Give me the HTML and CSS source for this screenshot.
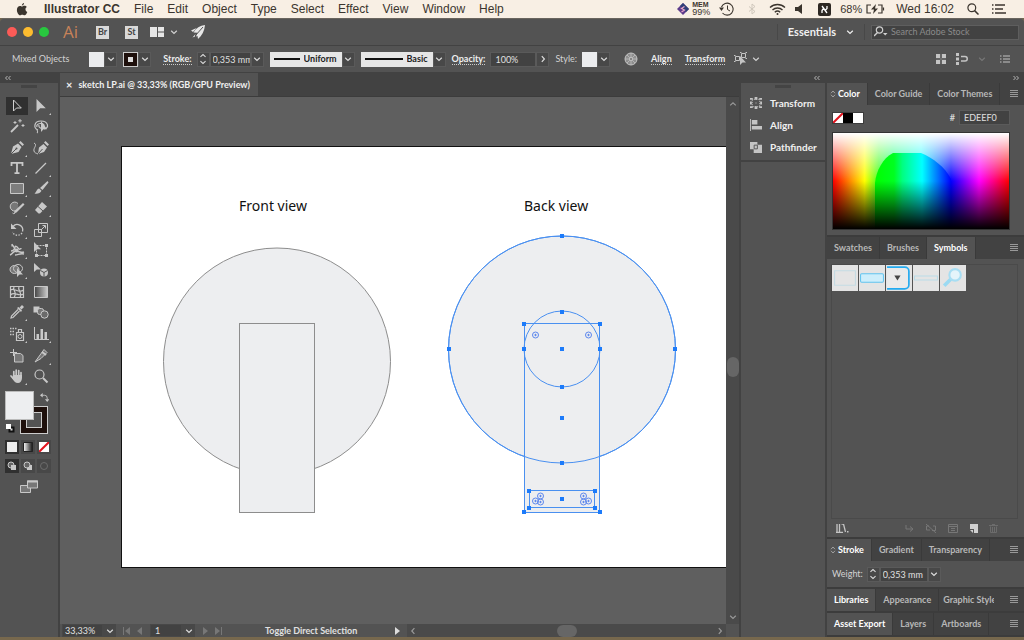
FILE: index.html
```html
<!DOCTYPE html>
<html lang="en">
<head>
    <meta charset="UTF-8">
    <meta name="viewport" content="width=device-width, initial-scale=1.0">
    <title>Illustrator CC</title>
    <link rel="stylesheet" href="styles.css">
</head>
<body>

    <!-- Shared icons -->
    <svg class="sprite" aria-hidden="true">
        <symbol id="chev" viewBox="0 0 8 8"><path d="M1.2 2.8 4 5.4 6.8 2.8" fill="none" stroke="currentColor" stroke-width="1.2"/></symbol>
        <symbol id="chev-up" viewBox="0 0 8 8"><path d="M1.2 5.4 4 2.8 6.8 5.4" fill="none" stroke="currentColor" stroke-width="1.2"/></symbol>
        <symbol id="chev-left" viewBox="0 0 8 8"><path d="M5.4 1.2 2.8 4 5.4 6.8" fill="none" stroke="currentColor" stroke-width="1.2"/></symbol>
        <symbol id="chev-right" viewBox="0 0 8 8"><path d="M2.8 1.2 5.4 4 2.8 6.8" fill="none" stroke="currentColor" stroke-width="1.2"/></symbol>
        <symbol id="spin" viewBox="0 0 8 14"><path d="M1 4.5 4 1.8 7 4.5M1 9.5 4 12.2 7 9.5" fill="none" stroke="currentColor" stroke-width="1.2"/></symbol>
        <symbol id="menu" viewBox="0 0 8 8"><path d="M0 .5h8M0 2.5h8M0 4.5h8M0 6.5h8" stroke="currentColor"/></symbol>
        <symbol id="none" viewBox="0 0 10 10"><path d="M0 0h10v10H0z" fill="#fff"/><path d="M0 10 10 0" stroke="#e3131d" stroke-width="2"/></symbol>
        <symbol id="collapse" viewBox="0 0 8 6"><path d="M3.5 1 1.5 3l2 2M6.5 1l-2 2 2 2" fill="none" stroke="currentColor"/></symbol>
        <symbol id="expand" viewBox="0 0 8 6"><path d="M1.5 1l2 2-2 2M4.5 1l2 2-2 2" fill="none" stroke="currentColor"/></symbol>
        <symbol id="updown" viewBox="0 0 6 8"><path d="M1 3.2 3 1l2 2.2M1 4.8 3 7l2-2.2" fill="none" stroke="currentColor" stroke-width=".8"/></symbol>
    </svg>

    <!-- System menu bar -->
    <header class="menubar">
        <svg class="apple" viewBox="0 0 12 14"><path d="M8.2 0c.1 1.400-1.100 2.800-2.400 2.800C5.700 1.500 6.900.1 8.200 0zM6 3.800c.6 0 1.400-.8 2.700-.8.9 0 1.900.5 2.500 1.400-2.200 1.200-1.800 4.400.5 5.200-.5 1.400-1.700 3.700-3 3.700-.9 0-1.300-.6-2.400-.6s-1.500.6-2.300.6C2.500 13.300.5 10.300.5 7.500.5 4.700 2.200 3.100 3.900 3.100c1 0 1.700.7 2.100.7z" fill="#3b352e"/></svg>
        <nav class="menus">
            <button class="menu app-name">Illustrator CC</button>
            <button class="menu">File</button>
            <button class="menu">Edit</button>
            <button class="menu">Object</button>
            <button class="menu">Type</button>
            <button class="menu">Select</button>
            <button class="menu">Effect</button>
            <button class="menu">View</button>
            <button class="menu">Window</button>
            <button class="menu">Help</button>
        </nav>
        <div class="sys">
            <svg width="12" height="12" viewBox="0 0 12 12"><path d="M6 0l6 6-6 6-6-6z" fill="#5d3c8c"/><path d="M6 0l6 6-3 3-6-6z" fill="#2e3f77"/><path d="M7.5 3.5 4.5 5.5l3 1.5-3 2" fill="none" stroke="#e8a6c8" stroke-width="1.2"/></svg>
            <div class="mem"><b>MEM</b><span>99%</span></div>
            <svg width="16" height="14" viewBox="0 0 16 14"><path d="M2.500 5A6 6 0 1 1 3.500 11" fill="none" stroke="#3b352e" stroke-width="1.1"/><path d="M0 5.500h5L2.500 9z" fill="#3b352e"/><path d="M8.500 3.500V7.500l2.500 1.500" fill="none" stroke="#3b352e"/></svg>
            <svg width="8" height="12" viewBox="0 0 8 12"><path d="M1 3.500 7 8.500 4 11V1l3 2.500-6 5" fill="none" stroke="#cfc7bc"/></svg>
            <svg width="17" height="12" viewBox="0 0 17 12"><path d="M1 4.500a11 11 0 0 1 15 0M3.500 7a7.200 7.200 0 0 1 10 0M5.800 9.300a4 4 0 0 1 5.400 0" fill="none" stroke="#3b352e" stroke-width="1.4"/><circle cx="8.5" cy="11" r="1" fill="#3b352e"/></svg>
            <svg class="sys-vol" width="8" height="10" viewBox="0 0 8 10"><path d="M0 3h3l4-3v10L3 7H0z" fill="#3b352e"/></svg>
            <svg width="13" height="13" viewBox="0 0 13 13"><rect width="13" height="13" rx="2" fill="#2d2823"/><path d="M4 3l5 7M9 3v2.500L7.500 7M4 10V7.500L5.500 5.500" stroke="#fff" stroke-width="1.3" fill="none"/></svg>
            <span class="battery">68%
                <svg width="19" height="10" viewBox="0 0 19 10"><path d="M5 1H1v8h4M12 1h4v8h-4M17.500 3.500v3" fill="none" stroke="#3b352e" stroke-width="1.2"/><path d="M10 0 5 5.500h3L7 10l5-5.500H9z" fill="#3b352e"/></svg>
            </span>
            <span class="clock">Wed 16:02</span>
            <svg width="12" height="12" viewBox="0 0 12 12"><circle cx="4.8" cy="4.8" r="3.9" fill="none" stroke="#3b352e" stroke-width="1.2"/><path d="M7.600 7.600 11.500 11.500" stroke="#3b352e" stroke-width="1.5"/></svg>
            <svg width="14" height="10" viewBox="0 0 14 10"><path d="M3 1h10M3 5h8M3 9h11M0 1h1.500M0 5h1.500M0 9h1.500" stroke="#3b352e" stroke-width="1.5"/></svg>
        </div>
    </header>

    <div class="window">
        <!-- Title bar -->
        <div class="titlebar">
            <div class="lights">
                <button class="light red" aria-label="Close"></button>
                <button class="light yellow" aria-label="Minimize"></button>
                <button class="light green" aria-label="Zoom"></button>
            </div>
            <span class="logo">Ai</span>
            <button class="square">Br</button>
            <button class="square">St</button>
            <button class="plain layout-btn" aria-label="Arrange documents">
                <svg width="14" height="10" viewBox="0 0 14 10"><path d="M0 0h7v10H0zM8 0h6v4.500H8zM8 5.500h6V10H8z" fill="#e6e6e6"/></svg>
                <svg class="i8"><use href="#chev"/></svg>
            </button>
            <button class="plain" aria-label="GPU performance">
                <svg width="14" height="14" viewBox="0 0 14 14"><path d="M14 0C9 .5 5 3 2.500 7.500l4 .2L5 11.500l1.500-.5L7 14C11 10.500 13.500 6 14 0zM0 5.500 5.500 3 2 7zM4.500 9 1.500 12.500 4 11.500z" fill="#e6e6e6"/><path d="M12 2 4 11" stroke="#535353"/></svg>
            </button>
            <div class="title-right">
                <button class="workspace-switch">Essentials <svg class="i8"><use href="#chev"/></svg></button>
                <label class="search">
                    <svg width="14" height="12" viewBox="0 0 14 12"><circle cx="5.5" cy="4" r="3.2" fill="none" stroke="#d0d0d0" stroke-width="1.2"/><path d="M3.500 6.500 0 10" stroke="#d0d0d0" stroke-width="1.4"/><path d="M9 7h4.500L11.200 9.500z" fill="#d0d0d0"/></svg>
                    <input type="text" placeholder="Search Adobe Stock" aria-label="Search Adobe Stock">
                </label>
            </div>
        </div>

        <!-- Control bar -->
        <div class="controlbar">
            <span class="selection-name">Mixed Objects</span>
            <div class="combo">
                <button class="swatch" aria-label="Fill"></button>
                <button class="arrow" aria-label="Fill options"><svg class="i8"><use href="#chev"/></svg></button>
            </div>
            <div class="combo">
                <button class="swatch stroke-swatch" aria-label="Stroke colour"></button>
                <button class="arrow" aria-label="Stroke options"><svg class="i8"><use href="#chev"/></svg></button>
            </div>
            <div class="field first">
                <label class="link" for="stroke-width">Stroke:</label>
                <div class="combo">
                    <button class="arrow" aria-label="Step"><svg class="spin"><use href="#spin"/></svg></button>
                    <input class="box stroke-box" id="stroke-width" type="text" value="0,353 mm">
                    <button class="arrow" aria-label="Stroke presets"><svg class="i8"><use href="#chev"/></svg></button>
                </div>
            </div>
            <div class="combo">
                <div class="line-pick">
                    <span class="line"></span>
                    <select aria-label="Width profile"><option>Uniform</option></select>
                </div>
                <span class="arrow"><svg class="i8"><use href="#chev"/></svg></span>
            </div>
            <div class="combo">
                <div class="line-pick">
                    <span class="line"></span>
                    <select aria-label="Brush"><option>Basic</option></select>
                </div>
                <span class="arrow"><svg class="i8"><use href="#chev"/></svg></span>
            </div>
            <div class="field">
                <label class="link" for="opacity">Opacity:</label>
                <div class="combo">
                    <input class="box opacity-box" id="opacity" type="text" value="100%">
                    <button class="arrow" aria-label="Opacity slider"><svg class="i8"><use href="#chev-right"/></svg></button>
                </div>
            </div>
            <div class="field">
                <span>Style:</span>
                <div class="combo">
                    <button class="swatch" aria-label="Graphic style"></button>
                    <button class="arrow" aria-label="Style options"><svg class="i8"><use href="#chev"/></svg></button>
                </div>
            </div>
            <div class="actions">
                <button class="plain" aria-label="Recolor artwork">
                    <svg width="14" height="14" viewBox="0 0 14 14"><circle cx="7" cy="7" r="6" fill="#8e8e8e" stroke="#c4c4c4"/><path d="M7 1v12M1 7h12M3 3l8 8M11 3l-8 8" stroke="#c4c4c4" stroke-width=".7"/><circle cx="7" cy="7" r="1.5" fill="#6a6a6a" stroke="#c4c4c4"/></svg>
                </button>
                <button class="plain link">Align</button>
                <button class="plain link">Transform</button>
                <button class="plain isolate" aria-label="Select similar">
                    <svg width="14" height="14" viewBox="0 0 14 14"><path d="M7.500 1.500h4v4h-4zM1.500 4.500h4v4h-4zM6 .5h1.500M11.500 .5H13M0 3.500h1.500M0 9.500h1.500M13 6.500h-1.500" fill="none" stroke="#c4c4c4"/><path d="M6 4v9l2.500-2.500H12z" fill="#c4c4c4"/></svg>
                    <svg class="i8"><use href="#chev"/></svg>
                </button>
            </div>
            <div class="bar-right">
                <svg width="10" height="10" viewBox="0 0 10 10"><path d="M0 0h4v4H0zM6 0h4v4H6zM0 6h4v4H0zM6 6h4v4H6z" fill="#c4c4c4"/><path d="M5 0v10M0 5h10" stroke="#777"/></svg>
                <svg width="12" height="12" viewBox="0 0 12 12"><path d="M0 0h3v3H0zM0 4.500h3v3H0zM0 9h3v3H0z" fill="#c4c4c4"/><path d="M5 3.500h4a2 2 0 0 1 0 4.500H5" fill="none" stroke="#c4c4c4" stroke-width="1.5"/></svg>
                <svg class="i8 dim"><use href="#chev"/></svg>
                <svg class="list-icon" width="10" height="8" viewBox="0 0 10 8"><path d="M3 1h7M3 4h7M3 7h7M0 1h1.500M0 4h1.500M0 7h1.500" stroke="#c4c4c4"/></svg>
            </div>
        </div>

        <div class="workspace">
            <!-- Tools panel -->
            <aside class="tools">
                <div class="strip left"><svg class="fold"><use href="#collapse"/></svg></div>
                <div class="grip"></div>
                <div class="tool-groups">
                    <div class="tool-group">
                        <button class="tool active" aria-label="Selection"><svg viewBox="0 0 16 16"><path d="M4.500 2v11l3-3h4.800z" fill="none" stroke="#d0d0d0"/></svg></button>
                        <button class="tool more" aria-label="Direct Selection"><svg viewBox="0 0 16 16"><path d="M3.500 1v13l3.700-3.700h5.600z" fill="#c8c8c8"/></svg></button>
                        <button class="tool" aria-label="Magic Wand"><svg viewBox="0 0 16 16"><path d="M2 14 9 7" stroke="#c8c8c8" stroke-width="1.8"/><path d="M11 1v3.500M9.300 2.800h3.500M14 6v3M12.500 7.500h3M6 3v3M4.500 4.500h3" stroke="#c8c8c8"/></svg></button>
                        <button class="tool" aria-label="Lasso"><svg viewBox="0 0 16 16"><path d="M5 12c-5-2-4-9 3-9s9 7 3 8M4 9c-2-4 8-5 7-1S5 10 6 7M4 12c1 2 1 2 0 3" fill="none" stroke="#c8c8c8" stroke-width="1.2"/><path d="M8 3v11l2.500-2.800h3.500z" fill="#c8c8c8"/></svg></button>
                    </div>
                    <div class="tool-group">
                        <button class="tool more" aria-label="Pen"><svg viewBox="0 0 16 16"><path d="M2 14 4 6.500 9 3.500 12.500 7 9.500 12z" fill="#c8c8c8"/><path d="M10 2.500 11.500 1 15 4.500 13.500 6z" fill="#c8c8c8"/><path d="M2 14l5-5" stroke="#535353"/><circle cx="7.5" cy="8.5" r="1" fill="#535353"/></svg></button>
                        <button class="tool" aria-label="Curvature"><svg viewBox="0 0 16 16"><path d="M5 14 6 7.500 10.500 4 14 7.500 11 12z" fill="#c8c8c8"/><path d="M11 2.500 12.500 1 16 4.500 14.500 6z" fill="#c8c8c8"/><path d="M5 14l4.500-5" stroke="#535353"/><path d="M1 3c4 2-1 5 0 8 .5 2 2 2 4 3" fill="none" stroke="#c8c8c8"/></svg></button>
                        <button class="tool more" aria-label="Type"><svg viewBox="0 0 16 16"><path d="M2.500 6V2.800h11V6M8 2.500v11M5.500 13.200h5" fill="none" stroke="#c8c8c8" stroke-width="1.800"/></svg></button>
                        <button class="tool more" aria-label="Line Segment"><svg viewBox="0 0 16 16"><path d="M2.500 13.500 13 3" stroke="#c8c8c8" stroke-width="1.2"/></svg></button>
                        <button class="tool more" aria-label="Rectangle"><svg viewBox="0 0 16 16"><path d="M1.500 3.500h13v10h-13z" fill="#7d7d7d" stroke="#c8c8c8"/></svg></button>
                        <button class="tool more" aria-label="Paintbrush"><svg viewBox="0 0 16 16"><path d="M14.500 1 15.500 2.500 9.500 10 7 8z" fill="#c8c8c8"/><path d="M6.200 8.500 8.500 10.800C7.500 13.500 4 14 1.500 13.500 3.500 12.500 3.500 9 6.200 8.500z" fill="#c8c8c8"/></svg></button>
                        <button class="tool more" aria-label="Shaper"><svg viewBox="0 0 16 16"><path d="M9.500 9A4.500 4.500 0 1 1 9 3.500" fill="#777" stroke="#c8c8c8"/><path d="M3.500 13c1 1 2 1 3-.5" fill="none" stroke="#c8c8c8"/><path d="M14 3l1.500 1.500-8 8-2.500.5.500-2z" fill="#c8c8c8"/></svg></button>
                        <button class="tool more" aria-label="Eraser"><svg viewBox="0 0 16 16"><path d="M9 2 14 6.500 7 13.500H5.500L2 10z" fill="#c8c8c8"/><path d="M5 6.500 10 11" stroke="#535353"/></svg></button>
                    </div>
                    <div class="tool-group">
                        <button class="tool more" aria-label="Rotate"><svg viewBox="0 0 16 16"><path d="M4 4.500a5.500 5.500 0 0 1 9.500 5" fill="none" stroke="#c8c8c8" stroke-width="1.3"/><path d="M13 11a5.500 5.500 0 0 1-9.500-1" fill="none" stroke="#c8c8c8" stroke-width="1.3" stroke-dasharray="1.5 1.3"/><path d="M2 1.500V7h5.500z" fill="#c8c8c8"/></svg></button>
                        <button class="tool more" aria-label="Scale"><svg viewBox="0 0 16 16"><path d="M5.500 1.500h9v9h-9zM1.500 7.500h7v7h-7z" fill="none" stroke="#c8c8c8"/><path d="M8 8l4-4M9.500 3.500h3v3" fill="none" stroke="#c8c8c8"/></svg></button>
                        <button class="tool more" aria-label="Width"><svg viewBox="0 0 16 16"><path d="M1 13c3-1 3-4 6-4s5 2 8 1M2 9c3 0 4-3 4-4s2-1 3 1 3 1 3 0M6 13c3 0 5-2 9-1" fill="none" stroke="#c8c8c8" stroke-width="1.5"/><path d="M3 2l4 7M3 2v2h2" stroke="#c8c8c8" stroke-width="1.2" fill="none"/><circle cx="7.500" cy="8.500" r="2" fill="#c8c8c8"/></svg></button>
                        <button class="tool" aria-label="Free Transform"><svg viewBox="0 0 16 16"><path d="M3.500 3.500h10v10h-10z" fill="none" stroke="#c8c8c8" stroke-dasharray="2 1"/><path d="M2 12h3v3H2zM12 12h3v3h-3zM12 2h3v3h-3z" fill="#c8c8c8"/><path d="M1 0v10l3-2.800h4z" fill="#c8c8c8"/></svg></button>
                        <button class="tool more" aria-label="Shape Builder"><svg viewBox="0 0 16 16"><ellipse cx="5.500" cy="7.500" rx="4.500" ry="4" fill="#777" stroke="#c8c8c8"/><ellipse cx="9" cy="6.500" rx="4.500" ry="4" fill="none" stroke="#c8c8c8"/><path d="M8 6v9l2.500-2.500H14z" fill="#c8c8c8"/></svg></button>
                        <button class="tool more" aria-label="Live Paint"><svg viewBox="0 0 16 16"><path d="M1 1v9l2.800-2.600H8z" fill="#c8c8c8"/><circle cx="11" cy="10.500" r="4" fill="#c8c8c8"/><path d="M11 10.500v4M11 10.500 7.500 8.500M11 10.500l3.500-2" stroke="#535353"/></svg></button>
                    </div>
                    <div class="tool-group">
                        <button class="tool" aria-label="Mesh"><svg viewBox="0 0 16 16"><path d="M1.500 2.500h13v11h-13zM1.500 6c4-3 8 4 13 0M1.500 11c4-4 8 2 13-1M5 2.500c-2 4 4 6 0 11M10 2.500c-2 4 4 6 1 11" fill="none" stroke="#c8c8c8" stroke-width="1.2"/></svg></button>
                        <button class="tool" aria-label="Gradient"><svg viewBox="0 0 16 16"><defs><linearGradient id="toolgrad"><stop offset="0" stop-color="#444"/><stop offset="1" stop-color="#ccc"/></linearGradient></defs><path d="M1.500 2.500h13v11h-13z" fill="url(#toolgrad)" stroke="#c8c8c8"/></svg></button>
                        <button class="tool more" aria-label="Eyedropper"><svg viewBox="0 0 16 16"><path d="M9 5.500 2.500 12 2 14l2-.5L10.500 7" fill="none" stroke="#c8c8c8" stroke-width="1.2"/><path d="M8 4l1.500-1L13 6.500 12 8zM10.500 3.500 13 1l2 2-2.500 2.500z" fill="#c8c8c8"/></svg></button>
                        <button class="tool" aria-label="Blend"><svg viewBox="0 0 16 16"><path d="M.5 2.500h6v6h-6z" fill="#c8c8c8"/><rect x="4.500" y="4.500" width="6" height="6" rx="2" fill="#777" stroke="#c8c8c8"/><circle cx="11.500" cy="10.500" r="3.700" fill="#6a6a6a" stroke="#c8c8c8"/></svg></button>
                    </div>
                    <div class="tool-group">
                        <button class="tool more" aria-label="Symbol Sprayer"><svg viewBox="0 0 16 16"><path d="M7.500 6.500h7v8h-7zM9.500 3.500h3v3h-3z" fill="none" stroke="#c8c8c8" stroke-width="1.2"/><circle cx="11" cy="10.500" r="2" fill="none" stroke="#c8c8c8"/><path d="M1 2.500h7M1 5.500h5M1 8.500h4" stroke="#c8c8c8" stroke-width="1.5" stroke-dasharray="1.5 1"/></svg></button>
                        <button class="tool more" aria-label="Column Graph"><svg viewBox="0 0 16 16"><path d="M1.500 1v12.500H16" fill="none" stroke="#c8c8c8"/><path d="M3.500 8H6v5H3.500zM7.500 3H10v10H7.500zM11.500 6H14v7h-2.500z" fill="#c8c8c8"/></svg></button>
                    </div>
                    <div class="tool-group">
                        <button class="tool" aria-label="Artboard"><svg viewBox="0 0 16 16"><path d="M1 4.500h7M4.500 1v7" stroke="#c8c8c8"/><path d="M5.500 5.500h6l2.500 2v6.500H5.500z" fill="#777" stroke="#c8c8c8"/></svg></button>
                        <button class="tool more" aria-label="Slice"><svg viewBox="0 0 16 16"><path d="M2 14 11 1.500 14 4.500 8 10.500z" fill="#777" stroke="#c8c8c8"/><path d="M9 4l4 3" stroke="#c8c8c8" stroke-width="2"/></svg></button>
                        <button class="tool more" aria-label="Hand"><svg viewBox="0 0 16 16"><path d="M4.800 8V3.500M7.200 7V2M9.700 7V2.500M12 8V4.500M2 8l3 3.500" stroke="#c8c8c8" stroke-width="1.7" stroke-linecap="round"/><path d="M4 7h9v3c0 3-2 5-4 5-3 0-4-2-6-5z" fill="#c8c8c8"/></svg></button>
                        <button class="tool" aria-label="Zoom"><svg viewBox="0 0 16 16"><circle cx="6.5" cy="6.5" r="4.5" fill="none" stroke="#c8c8c8" stroke-width="1.2"/><path d="M10 10l4.500 4.500" stroke="#c8c8c8" stroke-width="2"/></svg></button>
                    </div>
                </div>
                <div class="fill-stroke">
                    <button class="fs-stroke" aria-label="Stroke"></button>
                    <button class="fs-fill" aria-label="Fill"></button>
                    <button class="fs-swap" aria-label="Swap fill and stroke"><svg viewBox="0 0 10 10"><path d="M2.500 2.500H5a3 3 0 0 1 3 3V7" fill="none" stroke="#c8c8c8"/><path d="M0 2.500 3 0v5zM8 10 5.500 7h5z" fill="#c8c8c8"/></svg></button>
                    <button class="fs-default" aria-label="Default fill and stroke"><svg viewBox="0 0 9 9"><path d="M3.500 3.500h4v4h-4z" fill="#ddd" stroke="#111" stroke-width="2"/><path d="M0 0h5v5H0z" fill="#fff"/></svg></button>
                </div>
                <div class="modes">
                    <button class="mode on" aria-label="Color"><svg viewBox="0 0 10 10"><path d="M0 0h10v10H0z" fill="#eee"/></svg></button>
                    <button class="mode" aria-label="Gradient"><svg viewBox="0 0 10 10"><defs><linearGradient id="modegrad"><stop offset="0" stop-color="#fff"/><stop offset="1" stop-color="#111"/></linearGradient></defs><path d="M.5.5h9v9h-9z" fill="url(#modegrad)" stroke="#222"/></svg></button>
                    <button class="mode" aria-label="None"><svg viewBox="0 0 10 10"><use href="#none"/></svg></button>
                </div>
                <div class="modes">
                    <button class="mode on" aria-label="Draw Normal"><svg viewBox="0 0 10 10"><circle cx="4" cy="4" r="3" fill="#666" stroke="#c8c8c8"/><path d="M4 4h5v5H4z" fill="#c8c8c8"/></svg></button>
                    <button class="mode" aria-label="Draw Behind"><svg viewBox="0 0 10 10"><path d="M4 4h5v5H4z" fill="#c8c8c8"/><circle cx="4" cy="4" r="3" fill="#666" stroke="#c8c8c8"/></svg></button>
                    <button class="mode" aria-label="Draw Inside"><svg viewBox="0 0 10 10"><circle cx="5" cy="5" r="3.5" fill="#484848" stroke="#6c6c6c"/></svg></button>
                </div>
                <button class="plain screen-mode" aria-label="Change screen mode"><svg width="18" height="13" viewBox="0 0 18 13"><path d="M.5 5.500h10v7H.5z" fill="#777" stroke="#c8c8c8"/><path d="M7.500 1h10v7h-10z" fill="#777" stroke="#c8c8c8"/><path d="M7 1.500h11" stroke="#c8c8c8" stroke-width="2"/></svg></button>
            </aside>

            <!-- Document -->
            <main class="document">
                <div class="doc-tabs">
                    <div class="doc-tab"><button class="plain close" aria-label="Close tab">×</button>sketch LP.ai @ 33,33% (RGB/GPU Preview)</div>
                </div>
                <div class="doc-view">
                    <div class="canvas">
                        <div class="artboard">
                            <svg class="artwork" width="640" height="420" viewBox="0 0 640 420">
                                <text class="caption" x="117" y="64">Front view</text>
                                <text class="caption" x="402" y="64">Back view</text>
                                <g fill="#edeef0" stroke="#8d8d8d">
                                    <circle cx="155" cy="214.5" r="113.5"/>
                                    <rect x="117.5" y="176.5" width="75" height="189"/>
                                </g>
                                <g fill="#edeef0" stroke="#4a90f0">
                                    <circle cx="440" cy="202.5" r="113.5"/>
                                    <rect x="402.5" y="176.5" width="75" height="189"/>
                                    <circle cx="440" cy="202.5" r="113.5" fill="none"/>
                                    <circle cx="440" cy="202" r="38" fill="none"/>
                                    <rect x="407.5" y="343.5" width="65" height="17"/>
                                </g>
                                <!-- screws -->
                                <g fill="none" stroke="#5b86ee">
                                    <g id="screw"><circle cx="413.5" cy="188" r="3"/><circle cx="413.5" cy="188" r=".7" fill="#2a62e0"/></g>
                                    <use href="#screw" x="53"/>
                                    <use href="#screw" x="5" y="161"/>
                                    <use href="#screw" x="0" y="166"/>
                                    <use href="#screw" x="5" y="167"/>
                                    <use href="#screw" x="48" y="161"/>
                                    <use href="#screw" x="48" y="167"/>
                                    <use href="#screw" x="53" y="166"/>
                                </g>
                                <!-- anchors and centre points -->
                                <path fill="#1d7bfa" d="M438 87h4v4h-4zM438 314h4v4h-4zM325 200h4v4h-4zM551 200h4v4h-4zM438 163h4v4h-4zM438 238h4v4h-4zM400 200h4v4h-4zM476 200h4v4h-4zM438 200h4v4h-4zM400 175h4v4h-4zM476 175h4v4h-4zM400 363h4v4h-4zM476 363h4v4h-4zM438 269h4v4h-4zM405 342h4v4h-4zM471 342h4v4h-4zM405 359h4v4h-4zM471 359h4v4h-4zM438 350h4v4h-4z"/>
                            </svg>
                        </div>
                    </div>
                    <div class="vscroll">
                        <svg class="i8"><use href="#chev-up"/></svg>
                        <div class="thumb"></div>
                        <svg class="i8"><use href="#chev"/></svg>
                    </div>
                </div>
                <div class="statusbar">
                    <div class="combo">
                        <input class="box zoom-box" type="text" value="33,33%" aria-label="Zoom">
                        <button class="arrow" aria-label="Zoom presets"><svg class="i8"><use href="#chev"/></svg></button>
                    </div>
                    <div class="page-nav">
                        <svg class="i8" viewBox="0 0 8 8"><path d="M1 0h1v8H1zM8 0v8L3 4z" fill="#777"/></svg>
                        <svg class="i8" viewBox="0 0 8 8"><path d="M6 0v8L1 4z" fill="#777"/></svg>
                    </div>
                    <div class="combo">
                        <input class="box page-box" type="text" value="1" aria-label="Artboard number">
                        <button class="arrow" aria-label="Artboards"><svg class="i8"><use href="#chev"/></svg></button>
                    </div>
                    <div class="page-nav">
                        <svg class="i8" viewBox="0 0 8 8"><path d="M2 0v8l5-4z" fill="#777"/></svg>
                        <svg class="i8" viewBox="0 0 8 8"><path d="M6 0h1v8H6zM0 0v8l5-4z" fill="#777"/></svg>
                    </div>
                    <span class="status-text">Toggle Direct Selection</span>
                    <svg class="i8" viewBox="0 0 8 8"><path d="M2 0v8l5-4z" fill="#ddd"/></svg>
                    <div class="hscroll">
                        <svg class="i8"><use href="#chev-left"/></svg>
                        <div class="thumb"></div>
                        <svg class="i8"><use href="#chev-right"/></svg>
                    </div>
                </div>
            </main>

            <!-- Collapsed dock -->
            <aside class="dock">
                <div class="strip right"><svg class="fold"><use href="#collapse"/></svg></div>
                <div class="dock-items">
                    <div class="grip"></div>
                    <button class="dock-item"><svg viewBox="0 0 13 13"><path d="M2.500 2.500h8v8h-8z" fill="none" stroke="#c4c4c4" stroke-dasharray="1 1"/><path d="M0 1h3v2H0zM5 0h3v3H5zM10 1h3v2h-3zM0 10h3v2H0zM5 10h3v3H5zM10 10h3v2h-3zM0 5h2v3H0zM11 5h2v3h-2zM6 6h1v1H6z" fill="#c4c4c4"/></svg>Transform</button>
                    <button class="dock-item"><svg viewBox="0 0 13 13"><path d="M.5 0v13" stroke="#c4c4c4"/><path d="M2 1h6v5H2zM2 7.500h11v4H2z" fill="#c4c4c4"/></svg>Align</button>
                    <button class="dock-item"><svg viewBox="0 0 13 13"><path d="M0 1h8v3h5v9H4V9H0z" fill="#c4c4c4"/><path d="M4.500 4.500h3.500v4H4.500z" fill="none" stroke="#535353"/></svg>Pathfinder</button>
                </div>
            </aside>

            <!-- Panels -->
            <aside class="panels">
                <div class="strip right"><svg class="fold"><use href="#expand"/></svg></div>
                <section class="panel">
                    <div class="tabs" role="tablist">
                        <button class="tab active" role="tab"><svg class="updown"><use href="#updown"/></svg>Color</button>
                        <button class="tab" role="tab">Color Guide</button>
                        <button class="tab" role="tab">Color Themes</button>
                        <button class="panel-menu" aria-label="Panel menu"><svg class="i8"><use href="#menu"/></svg></button>
                    </div>
                    <div class="color-body">
                        <div class="color-row">
                            <div class="mini-swatches">
                                <svg viewBox="0 0 10 10"><use href="#none"/></svg>
                                <span class="black"></span>
                                <span class="white"></span>
                            </div>
                            <label class="hex">#<input class="box hex-box" type="text" value="EDEEF0"></label>
                        </div>
                        <svg class="spectrum" viewBox="0 0 176 96" preserveAspectRatio="none">
                            <defs>
                                <linearGradient id="hue">
                                    <stop offset="0" stop-color="#f00"/>
                                    <stop offset=".18" stop-color="#ff0"/>
                                    <stop offset=".26" stop-color="#4f2"/>
                                    <stop offset=".34" stop-color="#0f6"/>
                                    <stop offset=".5" stop-color="#0ff"/>
                                    <stop offset=".58" stop-color="#08f"/>
                                    <stop offset=".67" stop-color="#00f"/>
                                    <stop offset=".83" stop-color="#f0f"/>
                                    <stop offset="1" stop-color="#f00"/>
                                </linearGradient>
                                <linearGradient id="gamut" gradientUnits="userSpaceOnUse" x1="42" y1="0" x2="118" y2="0">
                                    <stop offset="0" stop-color="#0f0"/>
                                    <stop offset=".25" stop-color="#00ff20"/>
                                    <stop offset=".36" stop-color="#00ff80"/>
                                    <stop offset=".62" stop-color="#0ff"/>
                                    <stop offset="1" stop-color="#00f"/>
                                </linearGradient>
                                <linearGradient id="tint" x2="0" y2="1">
                                    <stop offset="0" stop-color="#fff"/>
                                    <stop offset=".5" stop-color="#fff" stop-opacity="0"/>
                                </linearGradient>
                                <linearGradient id="shade" x2="0" y2="1">
                                    <stop offset=".5" stop-opacity="0"/>
                                    <stop offset="1"/>
                                </linearGradient>
                            </defs>
                            <rect width="176" height="96" fill="url(#hue)"/>
                            <rect width="176" height="96" fill="url(#tint)"/>
                            <path d="M42 96V50C43 38 50 25 60 20H88C100 25 112 34 118 46V96z" fill="url(#gamut)"/>
                            <rect width="176" height="96" fill="url(#shade)"/>
                        </svg>
                    </div>
                </section>
                <section class="panel grow">
                    <div class="tabs" role="tablist">
                        <button class="tab" role="tab">Swatches</button>
                        <button class="tab" role="tab">Brushes</button>
                        <button class="tab active" role="tab">Symbols</button>
                        <button class="panel-menu" aria-label="Panel menu"><svg class="i8"><use href="#menu"/></svg></button>
                    </div>
                    <div class="symbol-list">
                        <button class="symbol" aria-label="Panel frame"><svg viewBox="0 0 25 25"><path d="M2.500 5.500h20v14h-20z" fill="none" stroke="#c3dbe3"/></svg></button>
                        <button class="symbol" aria-label="Button"><svg viewBox="0 0 25 25"><rect x="1.5" y="8.5" width="22" height="8" rx="1" fill="#cdeefb" stroke="#62c3ee"/></svg></button>
                        <button class="symbol" aria-label="Drop-down"><svg viewBox="0 0 25 25"><path d="M1 2h17a4 4 0 0 1 4 4v13a4 4 0 0 1-4 4H1" fill="#eaeaea" stroke="#22aaf0" stroke-width="1.6"/><path d="M8 10h6l-3 5z" fill="#444"/></svg></button>
                        <button class="symbol" aria-label="Field"><svg viewBox="0 0 25 25"><path d="M1.500 10.500h22v4h-22z" fill="none" stroke="#b9dce8"/></svg></button>
                        <button class="symbol" aria-label="Magnifier"><svg viewBox="0 0 25 25"><path d="M11 13 4 20" stroke="#9bdaf2" stroke-width="3.5"/><circle cx="14.5" cy="9.5" r="5.5" fill="#e4f4fa" stroke="#a8def3" stroke-width="2"/></svg></button>
                    </div>
                    <div class="panel-footer">
                        <svg width="13" height="9" viewBox="0 0 13 9"><path d="M1 0v8M3.500 0v8M5.500 0h2l2 8M0 8.500h7" stroke="#c4c4c4" fill="none" stroke-width="1.3"/><path d="M11 7h1.500v1.500H11z" fill="#c4c4c4"/></svg>
                        <svg class="foot-place" width="9" height="9" viewBox="0 0 9 9"><path d="M1 1v4h6M5 2.500 8 5 5 7.500" fill="none" stroke="#777"/></svg>
                        <svg width="12" height="9" viewBox="0 0 12 9"><path d="M4 2H1.500v4H5M8 2h2.500v4.500H7M1 0l10 9" fill="none" stroke="#777"/></svg>
                        <svg width="10" height="9" viewBox="0 0 10 9"><path d="M.5.500h9v8h-9zM.5 2.500h9M3 4.500h4M3 6.500h4" fill="none" stroke="#777"/></svg>
                        <svg width="9" height="9" viewBox="0 0 9 9"><path d="M1 0h8v9H5V5H1z" fill="#d0d0d0"/><path d="M1 6l3 3V6z" fill="#d0d0d0"/></svg>
                        <svg width="9" height="9" viewBox="0 0 9 9"><path d="M1.500 2.500v6h6v-6M0 1.500h9M3 .5h3M3.500 3v5M5.500 3v5" fill="none" stroke="#6c6c6c"/></svg>
                    </div>
                </section>
                <section class="panel">
                    <div class="tabs" role="tablist">
                        <button class="tab active" role="tab"><svg class="updown"><use href="#updown"/></svg>Stroke</button>
                        <button class="tab" role="tab">Gradient</button>
                        <button class="tab" role="tab">Transparency</button>
                        <button class="panel-menu" aria-label="Panel menu"><svg class="i8"><use href="#menu"/></svg></button>
                    </div>
                    <div class="weight-row">
                        <label for="weight">Weight:</label>
                        <div class="combo">
                            <button class="arrow" aria-label="Step"><svg class="spin"><use href="#spin"/></svg></button>
                            <input class="box weight-box" id="weight" type="text" value="0,353 mm">
                            <button class="arrow" aria-label="Weight presets"><svg class="i8"><use href="#chev"/></svg></button>
                        </div>
                    </div>
                </section>
                <section class="panel">
                    <div class="tabs" role="tablist">
                        <button class="tab active" role="tab">Libraries</button>
                        <button class="tab" role="tab">Appearance</button>
                        <button class="tab cut" role="tab">Graphic Styles</button>
                        <button class="panel-menu" aria-label="Panel menu"><svg class="i8"><use href="#menu"/></svg></button>
                    </div>
                </section>
                <section class="panel">
                    <div class="tabs" role="tablist">
                        <button class="tab active" role="tab">Asset Export</button>
                        <button class="tab" role="tab">Layers</button>
                        <button class="tab" role="tab">Artboards</button>
                        <button class="panel-menu" aria-label="Panel menu"><svg class="i8"><use href="#menu"/></svg></button>
                    </div>
                </section>
            </aside>
        </div>
    </div>
</body>
</html>
```

FILE: styles.css
```css
/* Global Styles */
* {
    margin: 0;
    padding: 0;
    box-sizing: border-box;
}

body {
    height: 100vh;
    display: flex;
    flex-direction: column;
    overflow: hidden;
    background: #77684d;
    color: #d2d2d2;
    font-family: 'Lato', sans-serif;
    font-size: 9px;
    line-height: 12px;
}

button,
input,
select {
    font: inherit;
    color: inherit;
    background: none;
    border: none;
    border-radius: 0;
    outline: none;
}

svg {
    display: block;
    flex: none;
}

.sprite {
    position: absolute;
    width: 0;
    height: 0;
}

.i8 {
    width: 8px;
    height: 8px;
}

.dim {
    color: #777;
}

.plain {
    display: flex;
    align-items: center;
}

/* System menu bar */
.menubar {
    height: 18px;
    flex: none;
    display: flex;
    align-items: center;
    padding: 0 18px 0 16px;
    background: #f8efe4;
    color: #3b352e;
    font-family: 'Liberation Sans', sans-serif;
    font-size: 12px;
}

.apple {
    width: 12px;
    height: 13px;
    margin-right: 16px;
}

.menus {
    display: flex;
    gap: 14px;
}

.menu {
    white-space: nowrap;
}

.app-name {
    font-weight: bold;
}

.sys {
    margin-left: auto;
    display: flex;
    align-items: center;
    gap: 13px;
}

.mem {
    display: flex;
    flex-direction: column;
    margin: 0 -4px 0 -10px;
    font-size: 9px;
    line-height: 8px;
}

.mem b {
    font-size: 7px;
    line-height: 6px;
}

.sys-vol {
    margin: 0 2px 0 -4px;
}

.battery {
    display: flex;
    align-items: center;
    gap: 4px;
    margin-left: -4px;
    font-size: 11px;
}

.clock {
    margin-left: -2px;
}

/* Application window */
.window {
    flex: 1;
    min-height: 0;
    display: flex;
    flex-direction: column;
    margin-bottom: 3px;
    background: #535353;
    border-radius: 4px 4px 0 0;
    border-top: 1px solid #6a655e;
}

.titlebar {
    height: 27px;
    flex: none;
    display: flex;
    align-items: center;
    padding: 0 5px 0 7px;
    border-bottom: 1px solid #424242;
}

.lights {
    display: flex;
    gap: 6px;
    margin-right: 14px;
}

.light {
    width: 10px;
    height: 10px;
    border-radius: 50%;
}

.red {
    background: #fc5b57;
}

.yellow {
    background: #fdbc2f;
}

.green {
    background: #28c83f;
}

.logo {
    width: 33px;
    color: #c78259;
    font-family: 'Open Sans', sans-serif;
    font-size: 17px;
    line-height: 20px;
}

.square {
    width: 13px;
    height: 13px;
    margin-right: 16px;
    background: #d9d9d9;
    color: #444;
    font-weight: bold;
    text-align: center;
}

.layout-btn {
    gap: 6px;
    margin: 0 13px 0 -4px;
}

.title-right {
    display: flex;
    align-items: center;
    margin-left: auto;
}

.workspace-switch {
    display: flex;
    align-items: center;
    gap: 10px;
    height: 16px;
    padding: 0 10px;
    margin-right: 6px;
    border: solid #484848;
    border-width: 0 1px;
    color: #f0f0f0;
    font-size: 11px;
    font-weight: bold;
}

.search {
    display: flex;
    align-items: center;
    gap: 3px;
    width: 148px;
    height: 15px;
    padding-left: 2px;
    background: #424242;
    border: 1px solid #5e5e5e;
}

.search input {
    flex: 1;
    min-width: 0;
}

.search input::placeholder {
    color: #8a8a8a;
}

/* Control bar */
.controlbar {
    height: 27px;
    flex: none;
    display: flex;
    align-items: center;
    gap: 6px;
    padding: 0 14px 0 12px;
    border-bottom: 1px solid #424242;
}

.selection-name {
    margin-right: 14px;
    white-space: nowrap;
}

.combo {
    display: flex;
    align-items: center;
    height: 15px;
}

.arrow {
    display: flex;
    align-items: center;
    justify-content: center;
    width: 13px;
    height: 15px;
    background: #484848;
    border: 1px solid #5a5a5a;
    color: #dcdcdc;
}

.spin {
    width: 8px;
    height: 12px;
}

.swatch {
    width: 15px;
    height: 15px;
    background: #ebecee;
}

.stroke-swatch {
    background: #ddd;
    border: 5px solid #1e100c;
    outline: 1px solid #ccc;
    outline-offset: -1px;
}

.box {
    height: 15px;
    padding: 0 4px;
    background: #424242;
    border: 1px solid #5a5a5a;
    color: #e0e0e0;
}

.stroke-box {
    width: 41px;
    padding: 0 0 0 2px;
}

.opacity-box {
    width: 46px;
}

.field {
    display: flex;
    align-items: center;
    gap: 5px;
}

.first {
    margin-left: 6px;
}

.link {
    color: #eee;
    font-weight: bold;
    border-bottom: 1px dotted #ccc;
    line-height: 10px;
}

.line-pick {
    display: flex;
    align-items: center;
    justify-content: space-between;
    width: 72px;
    height: 15px;
    padding: 0 4px;
    background: #e6e6e6;
    color: #222;
}

.line {
    flex: 1;
    height: 2px;
    margin-right: 4px;
    background: #111;
}

.line-pick select {
    appearance: none;
    font-weight: bold;
}

.actions {
    display: flex;
    align-items: center;
    gap: 13px;
    margin-left: 8px;
}

.isolate {
    gap: 4px;
    margin-left: -4px;
}

.bar-right {
    display: flex;
    align-items: center;
    gap: 10px;
    margin-left: auto;
}

.list-icon {
    margin-left: 4px;
}

/* Workspace */
.workspace {
    flex: 1;
    min-height: 0;
    display: flex;
}

.strip {
    height: 10px;
    flex: none;
    display: flex;
    align-items: center;
    padding: 0 4px;
    background: #424242;
    color: #b4b4b4;
}

.strip.right {
    justify-content: flex-end;
}

.fold {
    width: 8px;
    height: 6px;
}

.grip {
    width: 16px;
    height: 3px;
    flex: none;
    margin: 2px auto 0;
    background: #444;
}

/* Tools */
.tools {
    width: 60px;
    flex: none;
    display: flex;
    flex-direction: column;
    border-right: 2px solid #424242;
}

.tool-groups {
    display: flex;
    flex-direction: column;
    gap: 4px;
    padding: 9px 6px 6px;
}

.tool-group {
    display: grid;
    grid-template-columns: 22px 22px;
    gap: 2px;
}

.tool {
    position: relative;
    display: flex;
    align-items: center;
    justify-content: center;
    height: 18px;
}

.tool svg {
    width: 16px;
    height: 16px;
}

.tool.active {
    background: #303030;
}

.tool.more::after {
    content: '';
    position: absolute;
    right: 1px;
    bottom: 0;
    border: 1px solid;
    border-color: transparent #c8c8c8 #c8c8c8 transparent;
}

.fill-stroke {
    position: relative;
    height: 44px;
    margin: 0 5px 5px;
}

.fs-stroke {
    position: absolute;
    left: 15px;
    top: 15px;
    width: 28px;
    height: 28px;
    background: #535353;
    border: 6px solid #1e100c;
    outline: 1px solid #ccc;
    outline-offset: -1px;
    box-shadow: inset 0 0 0 1px #ccc;
}

.fs-fill {
    position: absolute;
    left: 0;
    top: 0;
    width: 29px;
    height: 29px;
    background: #edeef0;
    border: 1px solid #bbb;
}

.fs-swap {
    position: absolute;
    left: 35px;
    top: 2px;
    width: 9px;
    height: 9px;
}

.fs-default {
    position: absolute;
    left: 1px;
    top: 33px;
    width: 9px;
    height: 9px;
}

.modes {
    display: flex;
    gap: 2px;
    padding: 0 5px;
    margin-bottom: 5px;
}

.mode {
    display: flex;
    align-items: center;
    justify-content: center;
    width: 14px;
    height: 14px;
    background: #484848;
}

.mode.on {
    background: #303030;
}

.mode svg {
    width: 10px;
    height: 10px;
}

.screen-mode {
    margin: 2px auto;
}

/* Document */
.document {
    flex: 1;
    min-width: 0;
    display: flex;
    flex-direction: column;
}

.doc-tabs {
    height: 24px;
    flex: none;
    display: flex;
    background: #424242;
    border-bottom: 1px solid #3c3c3c;
}

.doc-tab {
    display: flex;
    align-items: center;
    gap: 6px;
    padding: 0 8px 0 6px;
    background: #535353;
    color: #f0f0f0;
    font-weight: bold;
    white-space: nowrap;
}

.close {
    font-size: 11px;
}

.doc-view {
    flex: 1;
    min-height: 0;
    display: flex;
}

.canvas {
    flex: 1;
    min-width: 0;
    padding: 49px 0 0 61px;
    overflow: hidden;
    background: #5f5f5f;
}

.artboard {
    overflow: hidden;
    background: #fff;
    border: solid #111;
    border-width: 1px 0 1px 1px;
}

.caption {
    font-family: 'Noto Sans', sans-serif;
    font-size: 14px;
    fill: #111;
}

.vscroll {
    width: 13px;
    flex: none;
    display: flex;
    flex-direction: column;
    align-items: center;
    justify-content: space-between;
    padding: 3px 0;
    background: #4a4a4a;
    color: #999;
}

.thumb {
    width: 20px;
    height: 12px;
    border-radius: 6px;
    background: #666;
}

.vscroll .thumb {
    width: 12px;
    height: 20px;
    margin-top: 12px;
}

.statusbar {
    height: 13px;
    flex: none;
    display: flex;
    align-items: center;
    gap: 6px;
    padding: 0 13px 0 2px;
}

.statusbar .box,
.statusbar .arrow,
.statusbar .combo {
    height: 13px;
    border-color: #484848;
}

.zoom-box {
    width: 41px;
    padding: 0 2px;
}

.page-box {
    width: 32px;
}

.page-nav {
    display: flex;
    gap: 6px;
}

.status-text {
    width: 122px;
    margin-left: 36px;
    color: #e0e0e0;
    font-weight: bold;
    white-space: nowrap;
}

.hscroll {
    flex: 1;
    display: flex;
    align-items: center;
    justify-content: space-between;
    height: 13px;
    padding: 0 2px;
    background: #4a4a4a;
    color: #999;
}

/* Dock */
.dock {
    width: 88px;
    flex: none;
    border: solid #424242;
    border-width: 0 2px;
}

.dock-items {
    padding-bottom: 2px;
    border-bottom: 2px solid #424242;
}

.dock-item {
    display: flex;
    align-items: center;
    gap: 8px;
    width: 100%;
    height: 22px;
    padding-left: 9px;
    color: #f0f0f0;
    font-size: 10px;
    font-weight: bold;
}

.dock-items .grip {
    margin-bottom: 4px;
}

.dock-item svg {
    width: 12px;
    height: 12px;
}

/* Panels */
.panels {
    width: 197px;
    flex: none;
    display: flex;
    flex-direction: column;
}

.panel {
    display: flex;
    flex-direction: column;
    border-bottom: 2px solid #3c3c3c;
}

.grow {
    flex: 1;
    min-height: 0;
}

.tabs {
    height: 22px;
    flex: none;
    display: flex;
    background: #424242;
}

.tab {
    display: flex;
    align-items: center;
    padding: 0 7px;
    border-right: 1px solid #3a3a3a;
    color: #b8b8b8;
    font-weight: bold;
    white-space: nowrap;
}

.tab.active {
    background: #535353;
    color: #fff;
}

.tab.cut {
    width: 55px;
    padding: 0 0 0 4px;
    overflow: hidden;
    border-right: none;
}

.updown {
    width: 6px;
    height: 8px;
    margin-right: 2px;
    margin-left: -4px;
    color: #b4b4b4;
}

.panel-menu {
    margin-left: auto;
    padding: 0 6px;
    color: #999;
}

.color-body {
    padding: 5px 14px 5px 5px;
}

.color-row {
    display: flex;
    align-items: center;
    justify-content: space-between;
    margin-bottom: 7px;
}

.mini-swatches {
    display: flex;
    border: 1px solid #3c3c3c;
}

.mini-swatches svg,
.mini-swatches span {
    width: 10px;
    height: 10px;
}

.black {
    background: #000;
}

.white {
    background: #fff;
}

.hex {
    display: flex;
    align-items: center;
    gap: 4px;
    font-weight: bold;
}

.hex-box {
    width: 51px;
    font-weight: normal;
}

.spectrum {
    width: 100%;
    height: 98px;
    border: 1px solid #333;
}

.symbol-list {
    flex: 1;
    display: flex;
    align-items: flex-start;
    gap: 1px;
    margin: 5px 6px 0 4px;
    border: 1px solid #4a4a4a;
}

.symbol {
    background: #e4e4e4;
}

.symbol svg {
    width: 26px;
    height: 26px;
}

.panel-footer {
    height: 18px;
    flex: none;
    display: flex;
    align-items: center;
    gap: 11px;
    padding: 0 26px 0 9px;
}

.foot-place {
    margin-left: auto;
}

.weight-row {
    display: flex;
    align-items: center;
    gap: 4px;
    height: 26px;
    padding-left: 5px;
}

.weight-box {
    width: 48px;
    padding: 0 2px;
}
```
